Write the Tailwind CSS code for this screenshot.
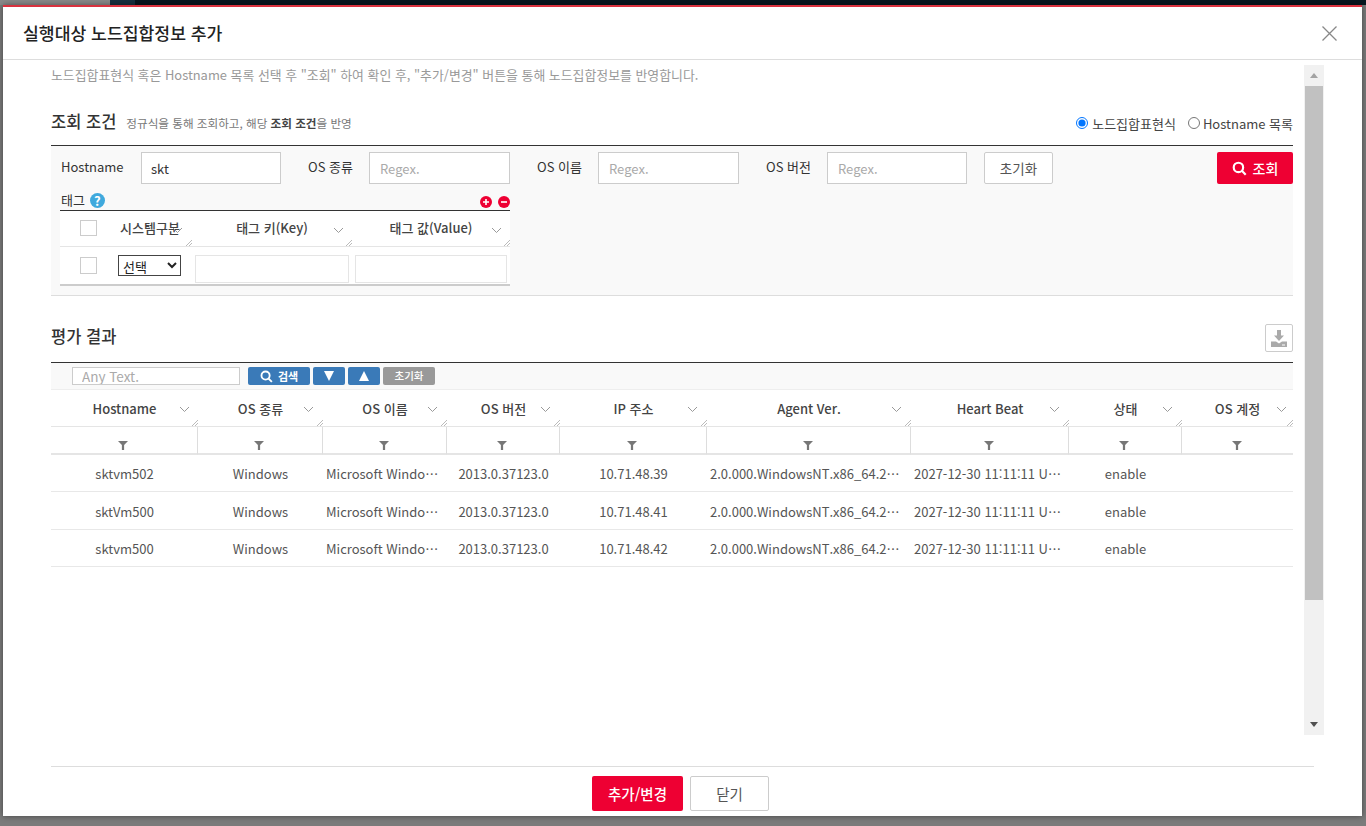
<!DOCTYPE html>
<html lang="ko">
<head>
<meta charset="utf-8">
<title>실행대상 노드집합정보 추가</title>
<script src="https://cdn.jsdelivr.net/npm/@tailwindcss/browser@4"></script>
</head>
<body class="relative h-[826px] w-[1366px] overflow-hidden bg-[#7b7b7b] font-['Noto_Sans_CJK_KR','Noto_Sans',sans-serif] text-[13px] text-[#333]">
<div class="flex h-[5px] w-full">
  <div class="w-[110px] bg-[#8a8a8a]"></div>
  <div class="w-[25px] bg-[#16303f]"></div>
  <div class="flex-1 bg-[#07161f]"></div>
</div>
<div class="absolute left-[3px] top-[5px] flex h-[811px] w-[1359px] flex-col border-t-2 border-[#d9323f] bg-white shadow-[0_0_6px_rgba(0,0,0,0.45)]">
  <header class="flex h-[53px] shrink-0 items-center justify-between border-b border-[#ddd] pl-[20px] pr-[24px]">
    <h1 class="text-[17.2px] font-medium text-[#222]">실행대상 노드집합정보 추가</h1>
    <svg class="h-[17px] w-[17px]" viewBox="0 0 17 17" fill="none" stroke="#888" stroke-width="1.3"><path d="M1.5 1.5l14 14M15.5 1.5l-14 14"/></svg>
  </header>
  <div class="flex min-h-0 flex-1">
    <main class="ml-[48px] w-[1242px] shrink-0">
      <p class="flex h-[30px] items-center text-[12.9px] text-[#999]">노드집합표현식 혹은 Hostname 목록 선택 후 "조회" 하여 확인 후, "추가/변경" 버튼을 통해 노드집합정보를 반영합니다.</p>
      <div class="flex h-[55px] items-end justify-between pb-[12px]">
        <div class="flex items-baseline gap-[10px]">
          <h2 class="text-[16.5px] font-medium leading-[24px] text-[#333]">조회 조건</h2>
          <span class="text-[11.6px] text-[#777]">정규식을 통해 조회하고, 해당 <b class="font-bold text-[#444]">조회 조건</b>을 반영</span>
        </div>
        <div class="flex items-center text-[13px] text-[#444]">
          <label class="flex items-center gap-[4px]"><input type="radio" name="t" checked class="m-0 h-[12px] w-[12px]">노드집합표현식</label>
          <label class="ml-[12px] flex items-center gap-[3px]"><input type="radio" name="t" class="m-0 h-[12px] w-[12px]">Hostname 목록</label>
        </div>
      </div>
      <section class="h-[151px] border-b border-t border-b-[#ddd] border-t-[#333] bg-[#f9f9f9] pl-[9px] pt-[6px]">
        <div class="flex h-[32px] items-center">
          <span class="w-[81px] pl-px pb-[2px]">Hostname</span>
          <input value="skt" class="h-[32px] w-[140px] border border-[#ccc] bg-white pl-[9px] text-[13px] text-[#333]">
          <span class="ml-[27px] w-[61px] pb-[2px]">OS 종류</span>
          <input placeholder="Regex." class="h-[32px] w-[141px] border border-[#ccc] bg-white pl-[10px] text-[13px] placeholder:text-[#aaa]">
          <span class="ml-[27px] w-[61px] pb-[2px]">OS 이름</span>
          <input placeholder="Regex." class="h-[32px] w-[141px] border border-[#ccc] bg-white pl-[10px] text-[13px] placeholder:text-[#aaa]">
          <span class="ml-[27px] w-[61px] pb-[2px]">OS 버전</span>
          <input placeholder="Regex." class="h-[32px] w-[140px] border border-[#ccc] bg-white pl-[10px] text-[13px] placeholder:text-[#aaa]">
          <button class="ml-[17px] h-[32px] w-[69px] rounded-[2px] border border-[#ccc] bg-white text-[13.5px] text-[#555]">초기화</button>
          <button class="ml-auto flex h-[32px] w-[76px] items-center justify-center gap-[6px] rounded-[2px] bg-[#ee0033] text-[14px] font-medium text-white">
            <svg class="h-[15px] w-[15px]" viewBox="0 0 14 14" fill="none" stroke="#fff" stroke-width="2"><circle cx="6" cy="6" r="4.4"/><path d="M9.2 9.2l3.6 3.6"/></svg>조회
          </button>
        </div>
        <div class="w-[450px]">
          <div class="flex h-[26px] items-end justify-between pb-[1px] pl-px">
            <div class="flex items-center gap-[5px]">
              <span class="text-[13px] leading-[18px]">태그</span>
              <span class="flex h-[15px] w-[15px] items-center justify-center rounded-full bg-[#3fa9dd] text-[13px] font-bold leading-none text-white">?</span>
            </div>
            <div class="mb-px flex gap-[6px]">
              <span class="flex h-[12px] w-[12px] items-center justify-center rounded-full bg-[#ee0033]"><svg class="h-[8px] w-[8px]" viewBox="0 0 8 8" stroke="#fff" stroke-width="1.6"><path d="M1 4h6M4 1v6"/></svg></span>
              <span class="flex h-[12px] w-[12px] items-center justify-center rounded-full bg-[#ee0033]"><svg class="h-[8px] w-[8px]" viewBox="0 0 8 8" stroke="#fff" stroke-width="1.6"><path d="M1 4h6"/></svg></span>
            </div>
          </div>
          <div class="grid grid-cols-[52px_80px_160px_158px] border-t border-[#333] bg-white">
            <div class="flex h-[36px] items-center border-b border-[#e5e5e5] pb-[2px] pl-[20px]"><span class="h-[16px] w-[17px] border border-[#ccc] bg-white"></span></div>
            <div class="relative flex h-[36px] items-center justify-center border-b border-[#e5e5e5] pb-[2px] pr-[4px] font-medium text-[#444]">시스템구분
              <svg class="absolute right-[9px] top-[16px] h-[7px] w-[11px]" viewBox="0 0 11 7" fill="none" stroke="#999"><path d="M1 1l4.500 4.500L10 1"/></svg>
              <svg class="absolute bottom-0 right-0 h-[6px] w-[6px]" viewBox="0 0 6 6" stroke="#aaa" stroke-width=".8"><path d="M0 6l6-6M3 6l3-3"/></svg>
            </div>
            <div class="relative flex h-[36px] items-center justify-center border-b border-[#e5e5e5] pb-[2px] font-medium text-[#444]">태그 키(Key)
              <svg class="absolute right-[8px] top-[16px] h-[7px] w-[11px]" viewBox="0 0 11 7" fill="none" stroke="#999"><path d="M1 1l4.500 4.500L10 1"/></svg>
              <svg class="absolute bottom-0 right-0 h-[6px] w-[6px]" viewBox="0 0 6 6" stroke="#aaa" stroke-width=".8"><path d="M0 6l6-6M3 6l3-3"/></svg>
            </div>
            <div class="relative flex h-[36px] items-center justify-center border-b border-[#e5e5e5] pb-[2px] font-medium text-[#444]">태그 값(Value)
              <svg class="absolute right-[8px] top-[16px] h-[7px] w-[11px]" viewBox="0 0 11 7" fill="none" stroke="#999"><path d="M1 1l4.500 4.500L10 1"/></svg>
              <svg class="absolute bottom-0 right-0 h-[6px] w-[6px]" viewBox="0 0 6 6" stroke="#aaa" stroke-width=".8"><path d="M0 6l6-6M3 6l3-3"/></svg>
            </div>
            <div class="flex h-[39px] items-center border-b-2 border-[#ccc] pb-[1px] pl-[20px]"><span class="h-[17px] w-[17px] border border-[#ccc] bg-white"></span></div>
            <div class="flex h-[39px] items-center border-b-2 border-[#ccc] pl-[6px]">
              <select class="h-[21px] w-[63px] border border-[#444] bg-white text-[13px] text-[#222]"><option>선택</option></select>
            </div>
            <div class="flex h-[39px] items-center border-b-2 border-[#ccc] pl-[3px] pr-[3px] pt-[7px]"><input class="h-[28px] w-[154px] border border-[#e5e5e5] bg-white"></div>
            <div class="flex h-[39px] items-center border-b-2 border-[#ccc] pl-[3px] pt-[7px]"><input class="h-[28px] w-[152px] border border-[#e5e5e5] bg-white"></div>
          </div>
        </div>
      </section>
      <div class="flex h-[66px] items-end justify-between pb-[10px]">
        <h2 class="pb-[4px] text-[16.5px] font-medium leading-[24px] text-[#333]">평가 결과</h2>
        <button class="flex h-[28px] w-[28px] items-center justify-center rounded-[2px] border border-[#ccc] bg-white">
          <svg class="h-[17px] w-[16px]" viewBox="0 0 16 17" fill="#aaa"><path d="M6 0h4v5.500h3L8 11 3 5.500h3z"/><path d="M0 11.500h5l3 2 3-2h5V17H0z"/><path d="M11 14.500h3v1h-3z" fill="#fff"/></svg>
        </button>
      </div>
      <div class="flex h-[28px] items-center gap-[3px] border-b border-t border-b-[#eee] border-t-[#333] bg-[#f9f9f9] pl-[21px]">
        <input placeholder="Any Text." class="mr-[5px] h-[18px] w-[168px] border border-[#ccc] bg-white pb-px pl-[9px] pt-[2px] text-[13.5px] placeholder:text-[#aaa]">
        <button class="flex h-[18px] w-[62px] items-center justify-center gap-[5px] rounded-[2px] bg-[#3a7ab8] text-[11px] font-bold text-white">
          <svg class="h-[13px] w-[13px]" viewBox="0 0 14 14" fill="none" stroke="#fff" stroke-width="2"><circle cx="6" cy="6" r="4.4"/><path d="M9.200 9.200l3.600 3.600"/></svg>검색
        </button>
        <button class="flex h-[18px] w-[32px] items-center justify-center rounded-[2px] bg-[#3a7ab8]"><svg class="h-[10px] w-[12px]" viewBox="0 0 12 10" fill="#fff"><path d="M1 0h10L6 10z"/></svg></button>
        <button class="flex h-[18px] w-[32px] items-center justify-center rounded-[2px] bg-[#3a7ab8]"><svg class="h-[10px] w-[12px]" viewBox="0 0 12 10" fill="#fff"><path d="M1 10h10L6 0z"/></svg></button>
        <button class="h-[18px] w-[52px] rounded-[2px] bg-[#999] text-[10.500px] font-medium text-white">초기화</button>
      </div>
      <div class="grid grid-cols-[147px_125px_124px_113px_147px_204px_158px_113px_111px]">
        <div class="relative flex h-[37px] items-center justify-center border-b border-[#e5e5e5] pt-[2px] font-medium text-[#444]">Hostname<svg class="absolute right-[8px] top-[16px] h-[7px] w-[11px]" viewBox="0 0 11 7" fill="none" stroke="#999"><path d="M1 1l4.500 4.500L10 1"/></svg><svg class="absolute bottom-0 right-0 h-[6px] w-[6px]" viewBox="0 0 6 6" stroke="#aaa" stroke-width=".8"><path d="M0 6l6-6M3 6l3-3"/></svg></div>
        <div class="relative flex h-[37px] items-center justify-center border-b border-[#e5e5e5] pt-[2px] font-medium text-[#444]">OS 종류<svg class="absolute right-[9px] top-[16px] h-[7px] w-[11px]" viewBox="0 0 11 7" fill="none" stroke="#999"><path d="M1 1l4.500 4.500L10 1"/></svg><svg class="absolute bottom-0 right-0 h-[6px] w-[6px]" viewBox="0 0 6 6" stroke="#aaa" stroke-width=".8"><path d="M0 6l6-6M3 6l3-3"/></svg></div>
        <div class="relative flex h-[37px] items-center justify-center border-b border-[#e5e5e5] pt-[2px] font-medium text-[#444]">OS 이름<svg class="absolute right-[9px] top-[16px] h-[7px] w-[11px]" viewBox="0 0 11 7" fill="none" stroke="#999"><path d="M1 1l4.500 4.500L10 1"/></svg><svg class="absolute bottom-0 right-0 h-[6px] w-[6px]" viewBox="0 0 6 6" stroke="#aaa" stroke-width=".8"><path d="M0 6l6-6M3 6l3-3"/></svg></div>
        <div class="relative flex h-[37px] items-center justify-center border-b border-[#e5e5e5] pt-[2px] font-medium text-[#444]">OS 버전<svg class="absolute right-[9px] top-[16px] h-[7px] w-[11px]" viewBox="0 0 11 7" fill="none" stroke="#999"><path d="M1 1l4.500 4.500L10 1"/></svg><svg class="absolute bottom-0 right-0 h-[6px] w-[6px]" viewBox="0 0 6 6" stroke="#aaa" stroke-width=".8"><path d="M0 6l6-6M3 6l3-3"/></svg></div>
        <div class="relative flex h-[37px] items-center justify-center border-b border-[#e5e5e5] pt-[2px] font-medium text-[#444]">IP 주소<svg class="absolute right-[9px] top-[16px] h-[7px] w-[11px]" viewBox="0 0 11 7" fill="none" stroke="#999"><path d="M1 1l4.500 4.500L10 1"/></svg><svg class="absolute bottom-0 right-0 h-[6px] w-[6px]" viewBox="0 0 6 6" stroke="#aaa" stroke-width=".8"><path d="M0 6l6-6M3 6l3-3"/></svg></div>
        <div class="relative flex h-[37px] items-center justify-center border-b border-[#e5e5e5] pt-[2px] font-medium text-[#444]">Agent Ver.<svg class="absolute right-[9px] top-[16px] h-[7px] w-[11px]" viewBox="0 0 11 7" fill="none" stroke="#999"><path d="M1 1l4.500 4.500L10 1"/></svg><svg class="absolute bottom-0 right-0 h-[6px] w-[6px]" viewBox="0 0 6 6" stroke="#aaa" stroke-width=".8"><path d="M0 6l6-6M3 6l3-3"/></svg></div>
        <div class="relative flex h-[37px] items-center justify-center border-b border-[#e5e5e5] pt-[2px] font-medium text-[#444]">Heart Beat<svg class="absolute right-[9px] top-[16px] h-[7px] w-[11px]" viewBox="0 0 11 7" fill="none" stroke="#999"><path d="M1 1l4.500 4.500L10 1"/></svg><svg class="absolute bottom-0 right-0 h-[6px] w-[6px]" viewBox="0 0 6 6" stroke="#aaa" stroke-width=".8"><path d="M0 6l6-6M3 6l3-3"/></svg></div>
        <div class="relative flex h-[37px] items-center justify-center border-b border-[#e5e5e5] pt-[2px] font-medium text-[#444]">상태<svg class="absolute right-[9px] top-[16px] h-[7px] w-[11px]" viewBox="0 0 11 7" fill="none" stroke="#999"><path d="M1 1l4.500 4.500L10 1"/></svg><svg class="absolute bottom-0 right-0 h-[6px] w-[6px]" viewBox="0 0 6 6" stroke="#aaa" stroke-width=".8"><path d="M0 6l6-6M3 6l3-3"/></svg></div>
        <div class="relative flex h-[37px] items-center justify-center border-b border-[#e5e5e5] pt-[2px] font-medium text-[#444]">OS 계정<svg class="absolute right-[6px] top-[16px] h-[7px] w-[11px]" viewBox="0 0 11 7" fill="none" stroke="#999"><path d="M1 1l4.500 4.500L10 1"/></svg><svg class="absolute bottom-0 right-0 h-[6px] w-[6px]" viewBox="0 0 6 6" stroke="#aaa" stroke-width=".8"><path d="M0 6l6-6M3 6l3-3"/></svg></div>

        <div class="flex h-[28px] items-center justify-center border-b-2 border-r border-b-[#e5e5e5] border-r-[#ddd] pr-[2px] pt-[10px]"><svg class="h-[9px] w-[10px]" viewBox="0 0 9 8" fill="#777"><path d="M0 0h9L5.500 3.500V8h-2V3.500z"/></svg></div>
        <div class="flex h-[28px] items-center justify-center border-b-2 border-r border-b-[#e5e5e5] border-r-[#ddd] pr-[3px] pt-[10px]"><svg class="h-[9px] w-[10px]" viewBox="0 0 9 8" fill="#777"><path d="M0 0h9L5.500 3.500V8h-2V3.500z"/></svg></div>
        <div class="flex h-[28px] items-center justify-center border-b-2 border-r border-b-[#e5e5e5] border-r-[#ddd] pr-[2px] pt-[10px]"><svg class="h-[9px] w-[10px]" viewBox="0 0 9 8" fill="#777"><path d="M0 0h9L5.500 3.500V8h-2V3.500z"/></svg></div>
        <div class="flex h-[28px] items-center justify-center border-b-2 border-r border-b-[#e5e5e5] border-r-[#ddd] pr-[2px] pt-[10px]"><svg class="h-[9px] w-[10px]" viewBox="0 0 9 8" fill="#777"><path d="M0 0h9L5.500 3.500V8h-2V3.500z"/></svg></div>
        <div class="flex h-[28px] items-center justify-center border-b-2 border-r border-b-[#e5e5e5] border-r-[#ddd] pr-[2px] pt-[10px]"><svg class="h-[9px] w-[10px]" viewBox="0 0 9 8" fill="#777"><path d="M0 0h9L5.500 3.500V8h-2V3.500z"/></svg></div>
        <div class="flex h-[28px] items-center justify-center border-b-2 border-r border-b-[#e5e5e5] border-r-[#ddd] pr-[2px] pt-[10px]"><svg class="h-[9px] w-[10px]" viewBox="0 0 9 8" fill="#777"><path d="M0 0h9L5.500 3.500V8h-2V3.500z"/></svg></div>
        <div class="flex h-[28px] items-center justify-center border-b-2 border-r border-b-[#e5e5e5] border-r-[#ddd] pr-[2px] pt-[10px]"><svg class="h-[9px] w-[10px]" viewBox="0 0 9 8" fill="#777"><path d="M0 0h9L5.500 3.500V8h-2V3.500z"/></svg></div>
        <div class="flex h-[28px] items-center justify-center border-b-2 border-r border-b-[#e5e5e5] border-r-[#ddd] pr-[2px] pt-[10px]"><svg class="h-[9px] w-[10px]" viewBox="0 0 9 8" fill="#777"><path d="M0 0h9L5.500 3.500V8h-2V3.500z"/></svg></div>
        <div class="flex h-[28px] items-center justify-center border-b-2 border-b-[#e5e5e5] pr-[2px] pt-[10px]"><svg class="h-[9px] w-[10px]" viewBox="0 0 9 8" fill="#777"><path d="M0 0h9L5.500 3.500V8h-2V3.500z"/></svg></div>

        <div class="flex h-[37px] items-center justify-center border-b border-[#e8e8e8] pt-[2px] text-[#555]">sktvm502</div>
        <div class="flex h-[37px] items-center justify-center border-b border-[#e8e8e8] pt-[2px] text-[#555]">Windows</div>
        <div class="flex h-[37px] items-center whitespace-nowrap border-b border-[#e8e8e8] pl-[3px] pt-[2px] text-[#555]">Microsoft Windo…</div>
        <div class="flex h-[37px] items-center justify-center border-b border-[#e8e8e8] pt-[2px] text-[#555]">2013.0.37123.0</div>
        <div class="flex h-[37px] items-center justify-center border-b border-[#e8e8e8] pt-[2px] text-[#555]">10.71.48.39</div>
        <div class="flex h-[37px] items-center whitespace-nowrap border-b border-[#e8e8e8] pl-[3px] pt-[2px] text-[#555]">2.0.000.WindowsNT.x86_64.2…</div>
        <div class="flex h-[37px] items-center whitespace-nowrap border-b border-[#e8e8e8] pl-[3px] pt-[2px] text-[#555]">2027-12-30 11:11:11 U…</div>
        <div class="flex h-[37px] items-center justify-center border-b border-[#e8e8e8] pt-[2px] text-[#555]">enable</div>
        <div class="h-[37px] border-b border-[#e8e8e8]"></div>

        <div class="flex h-[38px] items-center justify-center border-b border-[#e8e8e8] pt-[2px] text-[#555]">sktVm500</div>
        <div class="flex h-[38px] items-center justify-center border-b border-[#e8e8e8] pt-[2px] text-[#555]">Windows</div>
        <div class="flex h-[38px] items-center whitespace-nowrap border-b border-[#e8e8e8] pl-[3px] pt-[2px] text-[#555]">Microsoft Windo…</div>
        <div class="flex h-[38px] items-center justify-center border-b border-[#e8e8e8] pt-[2px] text-[#555]">2013.0.37123.0</div>
        <div class="flex h-[38px] items-center justify-center border-b border-[#e8e8e8] pt-[2px] text-[#555]">10.71.48.41</div>
        <div class="flex h-[38px] items-center whitespace-nowrap border-b border-[#e8e8e8] pl-[3px] pt-[2px] text-[#555]">2.0.000.WindowsNT.x86_64.2…</div>
        <div class="flex h-[38px] items-center whitespace-nowrap border-b border-[#e8e8e8] pl-[3px] pt-[2px] text-[#555]">2027-12-30 11:11:11 U…</div>
        <div class="flex h-[38px] items-center justify-center border-b border-[#e8e8e8] pt-[2px] text-[#555]">enable</div>
        <div class="h-[38px] border-b border-[#e8e8e8]"></div>

        <div class="flex h-[37px] items-center justify-center border-b border-[#e8e8e8] pt-[2px] text-[#555]">sktvm500</div>
        <div class="flex h-[37px] items-center justify-center border-b border-[#e8e8e8] pt-[2px] text-[#555]">Windows</div>
        <div class="flex h-[37px] items-center whitespace-nowrap border-b border-[#e8e8e8] pl-[3px] pt-[2px] text-[#555]">Microsoft Windo…</div>
        <div class="flex h-[37px] items-center justify-center border-b border-[#e8e8e8] pt-[2px] text-[#555]">2013.0.37123.0</div>
        <div class="flex h-[37px] items-center justify-center border-b border-[#e8e8e8] pt-[2px] text-[#555]">10.71.48.42</div>
        <div class="flex h-[37px] items-center whitespace-nowrap border-b border-[#e8e8e8] pl-[3px] pt-[2px] text-[#555]">2.0.000.WindowsNT.x86_64.2…</div>
        <div class="flex h-[37px] items-center whitespace-nowrap border-b border-[#e8e8e8] pl-[3px] pt-[2px] text-[#555]">2027-12-30 11:11:11 U…</div>
        <div class="flex h-[37px] items-center justify-center border-b border-[#e8e8e8] pt-[2px] text-[#555]">enable</div>
        <div class="h-[37px] border-b border-[#e8e8e8]"></div>
      </div>
    </main>
    <div class="ml-[11px] mt-[5px] flex h-[670px] w-[20px] shrink-0 flex-col items-center bg-[#f1f1f1]">
      <div class="flex h-[21px] w-full items-center justify-center"><svg class="h-[5px] w-[8px]" viewBox="0 0 8 5" fill="#a3a3a3"><path d="M4 0l4 5H0z"/></svg></div>
      <div class="h-[514px] w-[18px] bg-[#c1c1c1]"></div>
      <div class="mt-auto flex h-[21px] w-full items-center justify-center"><svg class="h-[5px] w-[8px]" viewBox="0 0 8 5" fill="#505050"><path d="M0 0h8L4 5z"/></svg></div>
    </div>
  </div>
  <footer class="ml-[48px] mr-[48px] flex h-[50px] shrink-0 justify-center gap-[7px] border-t border-[#ddd] pr-[4px] pt-[9px]">
    <button class="h-[35px] w-[91px] rounded-[2px] bg-[#ee0033] text-[14.5px] font-medium text-white">추가/변경</button>
    <button class="h-[35px] w-[79px] rounded-[2px] border border-[#ccc] bg-white text-[14.5px] text-[#555]">닫기</button>
  </footer>
</div>
</body>
</html>
